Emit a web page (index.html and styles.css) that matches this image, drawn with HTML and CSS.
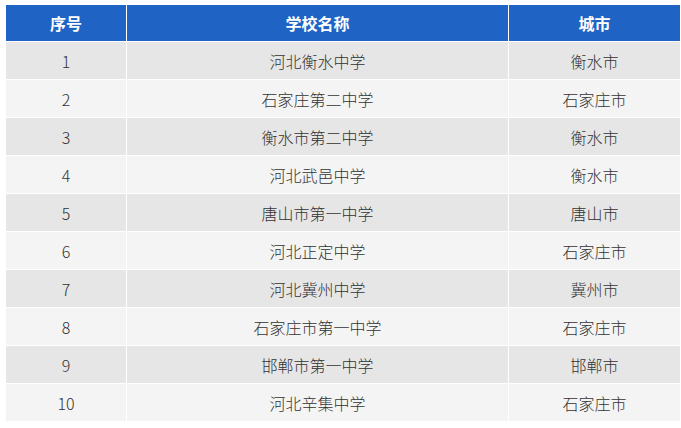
FILE: index.html
```html
<!DOCTYPE html>
<html lang="zh">
<head>
<meta charset="utf-8">
<link rel="stylesheet" href="styles.css">
</head>
<body>
<div class="wrap">
<table class="schools">
<colgroup><col class="c1"><col class="c2"><col class="c3"></colgroup>
<thead>
<tr><th>序号</th><th>学校名称</th><th>城市</th></tr>
</thead>
<tbody>
<tr><td>1</td><td>河北衡水中学</td><td>衡水市</td></tr>
<tr><td>2</td><td>石家庄第二中学</td><td>石家庄市</td></tr>
<tr><td>3</td><td>衡水市第二中学</td><td>衡水市</td></tr>
<tr><td>4</td><td>河北武邑中学</td><td>衡水市</td></tr>
<tr><td>5</td><td>唐山市第一中学</td><td>唐山市</td></tr>
<tr><td>6</td><td>河北正定中学</td><td>石家庄市</td></tr>
<tr><td>7</td><td>河北冀州中学</td><td>冀州市</td></tr>
<tr><td>8</td><td>石家庄市第一中学</td><td>石家庄市</td></tr>
<tr><td>9</td><td>邯郸市第一中学</td><td>邯郸市</td></tr>
<tr><td>10</td><td>河北辛集中学</td><td>石家庄市</td></tr>
</tbody>
</table>
</div>
</body>
</html>
```
FILE: styles.css
```css
html, body {
  margin: 0;
  padding: 0;
  background: #fff;
}
.wrap {
  padding: 5px 1px 0 5px;
}
.schools {
  width: 675px;
  border-collapse: collapse;
  table-layout: fixed;
  font-family: "Noto Sans CJK SC", "Noto Sans", sans-serif;
  font-size: 16px;
  font-weight: 300;
  color: #333;
}
.c1 { width: 121px; }
.c2 { width: 382px; }
.c3 { width: 172px; }
.schools th, .schools td {
  border: 1px solid #fff;
  text-align: center;
  padding: 0;
}
.schools th {
  height: 36px;
  background: #1f64c4;
  color: #fff;
  font-weight: bold;
  border-top: none;
}
.schools td {
  height: 37px;
}
.schools tbody tr:nth-child(odd) td { background: #e6e6e6; }
.schools tbody tr:nth-child(even) td { background: #f4f4f4; }
```
